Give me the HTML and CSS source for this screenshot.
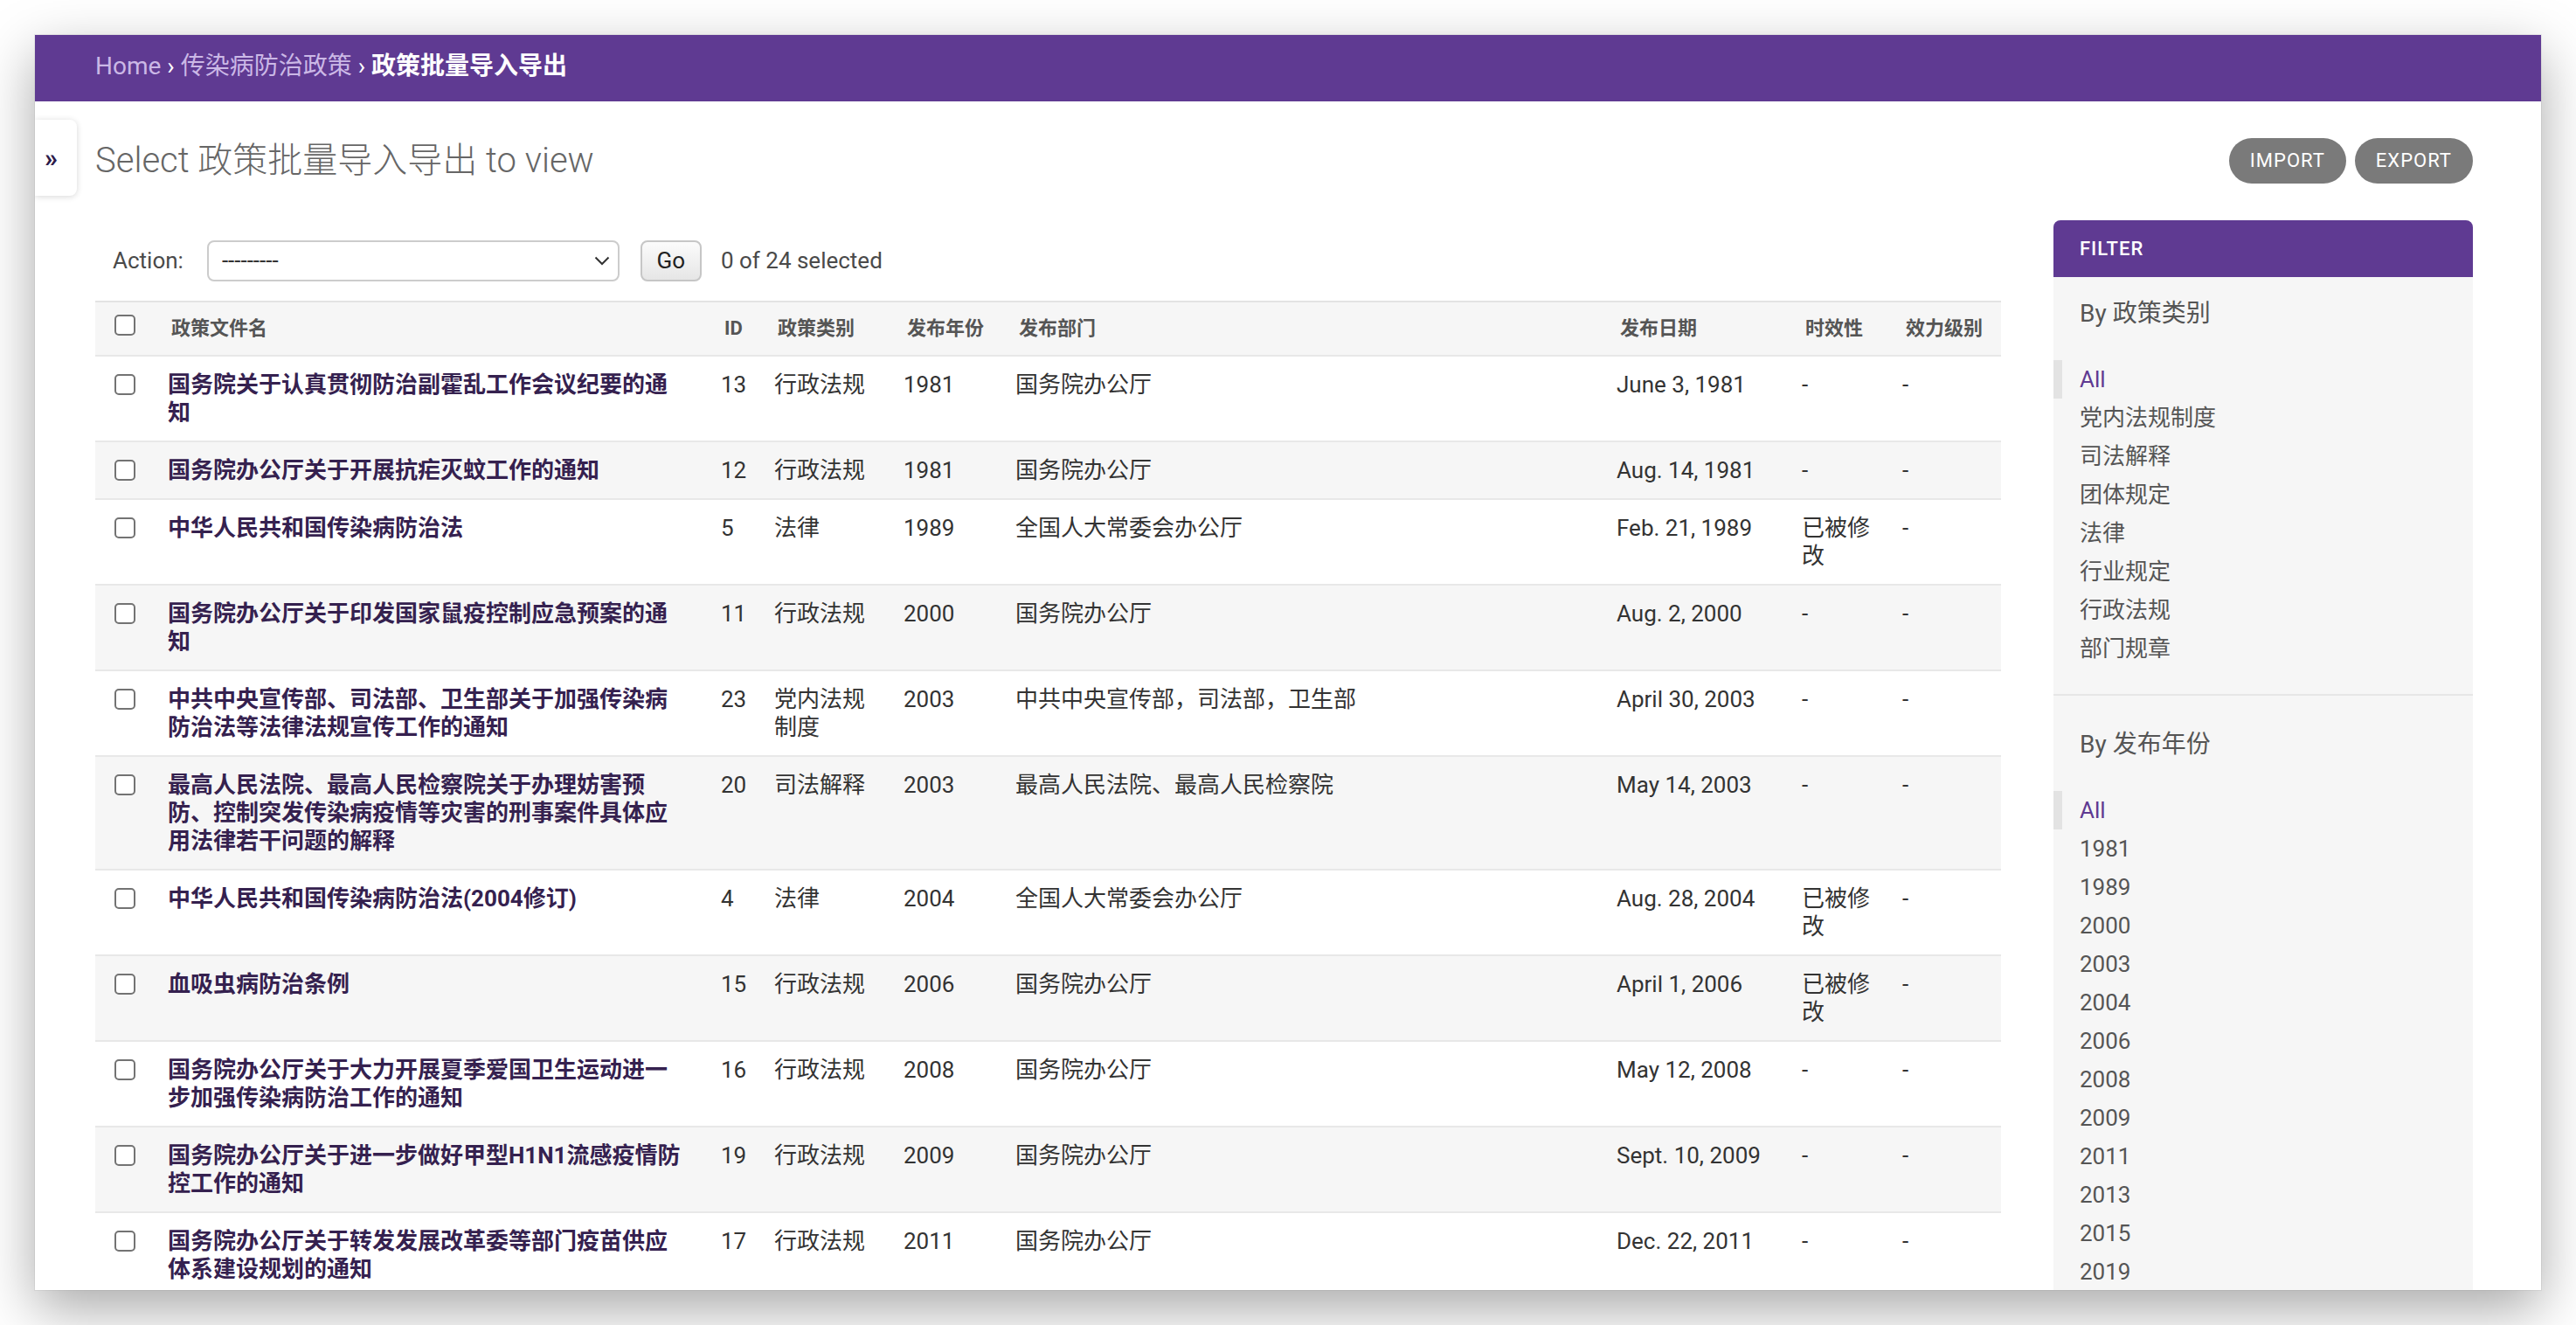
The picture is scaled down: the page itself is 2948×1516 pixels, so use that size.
FILE: index.html
```html
<!DOCTYPE html>
<html lang="zh-CN">
<head>
<meta charset="utf-8">
<title>Select 政策批量导入导出 to view</title>
<link rel="stylesheet" href="styles.css">
</head>
<body>
<div class="window">
  <div class="breadcrumbs"><a href="#">Home</a> › <a href="#">传染病防治政策</a> › <span class="current">政策批量导入导出</span></div>
  <button class="toggle-nav" type="button">»</button>
  <div class="content">
    <div class="title-row">
      <h1>Select 政策批量导入导出 to view</h1>
      <ul class="object-tools">
        <li><a href="#">Import</a></li>
        <li><a href="#">Export</a></li>
      </ul>
    </div>
    <div class="changelist">
      <div class="form-area">
        <div class="actions">
          <label class="action-label">Action:</label>
          <div class="select-wrap">
            <select class="action-select"><option>---------</option></select>
            <svg class="chevron" width="18" height="11" viewBox="0 0 18 11"><path d="M1.5 1.5 L9 9 L16.5 1.5" fill="none" stroke="#333" stroke-width="2"/></svg>
          </div>
          <button class="go" type="button">Go</button>
          <span class="counter">0 of 24 selected</span>
        </div>
        <table class="result-list">
          <colgroup>
            <col class="c-check"><col class="c-name"><col class="c-id"><col class="c-type"><col class="c-year"><col class="c-dept"><col class="c-date"><col class="c-valid"><col class="c-level">
          </colgroup>
          <thead>
            <tr>
              <th class="check-col"><input type="checkbox" class="cb cb-head"></th>
              <th>政策文件名</th>
              <th>ID</th>
              <th>政策类别</th>
              <th>发布年份</th>
              <th>发布部门</th>
              <th>发布日期</th>
              <th>时效性</th>
              <th>效力级别</th>
            </tr>
          </thead>
          <tbody>
            <tr class="row1">
              <td class="check-col"><input type="checkbox" class="cb"></td>
              <th class="field-name"><a href="#">国务院关于认真贯彻防治副霍乱工作会议纪要的通知</a></th>
              <td>13</td><td>行政法规</td><td>1981</td><td>国务院办公厅</td><td>June 3, 1981</td><td>-</td><td>-</td>
            </tr>
            <tr class="row2">
              <td class="check-col"><input type="checkbox" class="cb"></td>
              <th class="field-name"><a href="#">国务院办公厅关于开展抗疟灭蚊工作的通知</a></th>
              <td>12</td><td>行政法规</td><td>1981</td><td>国务院办公厅</td><td>Aug. 14, 1981</td><td>-</td><td>-</td>
            </tr>
            <tr class="row1">
              <td class="check-col"><input type="checkbox" class="cb"></td>
              <th class="field-name"><a href="#">中华人民共和国传染病防治法</a></th>
              <td>5</td><td>法律</td><td>1989</td><td>全国人大常委会办公厅</td><td>Feb. 21, 1989</td><td>已被修改</td><td>-</td>
            </tr>
            <tr class="row2">
              <td class="check-col"><input type="checkbox" class="cb"></td>
              <th class="field-name"><a href="#">国务院办公厅关于印发国家鼠疫控制应急预案的通知</a></th>
              <td>11</td><td>行政法规</td><td>2000</td><td>国务院办公厅</td><td>Aug. 2, 2000</td><td>-</td><td>-</td>
            </tr>
            <tr class="row1">
              <td class="check-col"><input type="checkbox" class="cb"></td>
              <th class="field-name"><a href="#">中共中央宣传部、司法部、卫生部关于加强传染病防治法等法律法规宣传工作的通知</a></th>
              <td>23</td><td>党内法规制度</td><td>2003</td><td>中共中央宣传部，司法部，卫生部</td><td>April 30, 2003</td><td>-</td><td>-</td>
            </tr>
            <tr class="row2">
              <td class="check-col"><input type="checkbox" class="cb"></td>
              <th class="field-name"><a href="#">最高人民法院、最高人民检察院关于办理妨害预防、控制突发传染病疫情等灾害的刑事案件具体应用法律若干问题的解释</a></th>
              <td>20</td><td>司法解释</td><td>2003</td><td>最高人民法院、最高人民检察院</td><td>May 14, 2003</td><td>-</td><td>-</td>
            </tr>
            <tr class="row1">
              <td class="check-col"><input type="checkbox" class="cb"></td>
              <th class="field-name"><a href="#">中华人民共和国传染病防治法(2004修订)</a></th>
              <td>4</td><td>法律</td><td>2004</td><td>全国人大常委会办公厅</td><td>Aug. 28, 2004</td><td>已被修改</td><td>-</td>
            </tr>
            <tr class="row2">
              <td class="check-col"><input type="checkbox" class="cb"></td>
              <th class="field-name"><a href="#">血吸虫病防治条例</a></th>
              <td>15</td><td>行政法规</td><td>2006</td><td>国务院办公厅</td><td>April 1, 2006</td><td>已被修改</td><td>-</td>
            </tr>
            <tr class="row1">
              <td class="check-col"><input type="checkbox" class="cb"></td>
              <th class="field-name"><a href="#">国务院办公厅关于大力开展夏季爱国卫生运动进一步加强传染病防治工作的通知</a></th>
              <td>16</td><td>行政法规</td><td>2008</td><td>国务院办公厅</td><td>May 12, 2008</td><td>-</td><td>-</td>
            </tr>
            <tr class="row2">
              <td class="check-col"><input type="checkbox" class="cb"></td>
              <th class="field-name"><a href="#">国务院办公厅关于进一步做好甲型H1N1流感疫情防控工作的通知</a></th>
              <td>19</td><td>行政法规</td><td>2009</td><td>国务院办公厅</td><td>Sept. 10, 2009</td><td>-</td><td>-</td>
            </tr>
            <tr class="row1">
              <td class="check-col"><input type="checkbox" class="cb"></td>
              <th class="field-name"><a href="#">国务院办公厅关于转发发展改革委等部门疫苗供应体系建设规划的通知</a></th>
              <td>17</td><td>行政法规</td><td>2011</td><td>国务院办公厅</td><td>Dec. 22, 2011</td><td>-</td><td>-</td>
            </tr>
          </tbody>
        </table>
      </div>
      <div class="filter">
        <h2 class="filter-title">Filter</h2>
        <h3>By 政策类别</h3>
        <ul>
          <li class="selected"><a href="#">All</a></li>
          <li><a href="#">党内法规制度</a></li>
          <li><a href="#">司法解释</a></li>
          <li><a href="#">团体规定</a></li>
          <li><a href="#">法律</a></li>
          <li><a href="#">行业规定</a></li>
          <li><a href="#">行政法规</a></li>
          <li><a href="#">部门规章</a></li>
        </ul>
        <h3>By 发布年份</h3>
        <ul>
          <li class="selected"><a href="#">All</a></li>
          <li><a href="#">1981</a></li>
          <li><a href="#">1989</a></li>
          <li><a href="#">2000</a></li>
          <li><a href="#">2003</a></li>
          <li><a href="#">2004</a></li>
          <li><a href="#">2006</a></li>
          <li><a href="#">2008</a></li>
          <li><a href="#">2009</a></li>
          <li><a href="#">2011</a></li>
          <li><a href="#">2013</a></li>
          <li><a href="#">2015</a></li>
          <li><a href="#">2019</a></li>
        </ul>
      </div>
    </div>
  </div>
</div>
</body>
</html>
```

FILE: styles.css
```css
* { box-sizing: border-box; }
html, body { margin: 0; padding: 0; background: #ffffff; }
body {
  font-family: Roboto, "Noto Sans CJK SC", sans-serif;
  color: #333333;
  font-size: 26px;
}
a { text-decoration: none; }

.window {
  position: relative;
  margin: 40px;
  width: 2868px;
  height: 1436px;
  overflow: hidden;
  background: #ffffff;
  box-shadow: 0 22px 60px rgba(0, 0, 0, 0.34), 0 0 0 1px rgba(0, 0, 0, 0.05);
}

.breadcrumbs {
  height: 76px;
  padding: 18px 69px 0;
  line-height: 36px;
  font-size: 28px;
  background: #5f3a92;
  color: #ffffff;
  white-space: nowrap;
}
.breadcrumbs a { color: #cbb8e6; }
.breadcrumbs .current { font-weight: 700; }

.toggle-nav {
  position: absolute;
  left: 0;
  top: 97px;
  width: 48px;
  height: 87px;
  padding: 0 0 0 11px;
  border: none;
  border-radius: 0 8px 8px 0;
  background: #ffffff;
  box-shadow: 0 1px 7px rgba(0, 0, 0, 0.16);
  color: #2d1b4a;
  font-family: Roboto, sans-serif;
  font-size: 30px;
  font-weight: 700;
  text-align: left;
  line-height: 87px;
}

.content { padding: 40px 78px 0 69px; }

.title-row {
  display: flex;
  justify-content: space-between;
  align-items: center;
  height: 56px;
  margin-bottom: 40px;
}
.title-row h1 {
  margin: 0;
  font-size: 40px;
  font-weight: 300;
  line-height: 48px;
  color: #666666;
}
.object-tools {
  display: flex;
  gap: 10px;
  margin: 0;
  padding: 0;
  list-style: none;
}
.object-tools a {
  display: block;
  height: 52px;
  padding: 0 24px;
  line-height: 52px;
  border-radius: 26px;
  background: #7a7a7a;
  color: #ffffff;
  font-size: 22px;
  letter-spacing: 1px;
  text-transform: uppercase;
}

.changelist { display: flex; align-items: flex-start; }
.form-area { flex: 1 1 auto; min-width: 0; }

.actions {
  display: flex;
  align-items: center;
  height: 92px;
  padding: 0 20px;
  color: #4a4a4a;
  font-size: 26px;
}
.action-label { color: #4a4a4a; }
.select-wrap {
  position: relative;
  width: 472px;
  height: 47px;
  margin-left: 27px;
}
.action-select {
  -webkit-appearance: none;
  appearance: none;
  width: 100%;
  height: 100%;
  padding: 0 15px;
  border: 2px solid #cccccc;
  border-radius: 8px;
  background: #ffffff;
  color: #333333;
  font-family: Roboto, sans-serif;
  font-size: 26px;
}
.chevron {
  position: absolute;
  right: 11px;
  top: 18px;
}
.go {
  width: 70px;
  height: 47px;
  margin-left: 24px;
  padding: 0;
  border: 2px solid #c6c6c6;
  border-radius: 8px;
  background: linear-gradient(#fbfbfb, #e6e6e6);
  color: #222222;
  font-family: Roboto, sans-serif;
  font-size: 26px;
}
.counter { margin-left: 22px; }

.result-list {
  width: 100%;
  table-layout: fixed;
  border-collapse: separate;
  border-spacing: 0;
}
.c-check { width: 67px; }
.c-name { width: 633px; }
.c-id { width: 61px; }
.c-type { width: 148px; }
.c-year { width: 128px; }
.c-dept { width: 688px; }
.c-date { width: 212px; }
.c-valid { width: 115px; }
.c-level { width: 129px; }

.result-list thead th {
  padding: 14px 20px;
  background: #f6f6f6;
  border-top: 2px solid #e3e3e3;
  border-bottom: 2px solid #e8e8e8;
  font-size: 22px;
  line-height: 32px;
  font-weight: 700;
  color: #555555;
  text-align: left;
  white-space: nowrap;
  vertical-align: middle;
}
.result-list thead th.check-col { padding: 10px 0 18px; }

.result-list tbody td,
.result-list tbody th {
  padding: 16px;
  font-size: 26px;
  line-height: 32px;
  font-weight: 400;
  text-align: left;
  vertical-align: top;
  border-bottom: 2px solid #e8e8e8;
  color: #333333;
}
.result-list tbody th.field-name { padding-right: 25px; }
.result-list tbody th.field-name a { color: #35214f; font-weight: 700; }
.result-list tbody td.check-col { padding-left: 0; padding-right: 0; }
.row1 { background: #ffffff; }
.row2 { background: #f6f6f6; }

.cb {
  -webkit-appearance: none;
  appearance: none;
  display: block;
  width: 24px;
  height: 24px;
  margin: 4px auto 0;
  border: 2px solid #737373;
  border-radius: 5px;
  background: #ffffff;
}
.cb-head { margin: 0 auto; }

.filter {
  flex: 0 0 480px;
  width: 480px;
  margin-left: 60px;
  min-height: 1400px;
  background: #f6f6f6;
  border-radius: 8px 8px 0 0;
}
.filter-title {
  margin: 0;
  height: 65px;
  padding: 0 30px;
  line-height: 65px;
  border-radius: 8px 8px 0 0;
  background: #5f3a92;
  color: #ffffff;
  font-size: 22px;
  font-weight: 500;
  letter-spacing: 1px;
  text-transform: uppercase;
}
.filter h3 {
  margin: 24px 0 35px;
  padding: 0 30px;
  font-size: 28px;
  font-weight: 400;
  line-height: 36px;
  color: #555555;
}
.filter ul {
  margin: 0 0 38px;
  padding: 0 30px 30px;
  list-style: none;
  border-bottom: 2px solid #e6e6e6;
}
.filter li {
  padding: 2px 0;
  font-size: 26px;
  line-height: 40px;
}
.filter li a { display: block; color: #555555; }
.filter li.selected {
  margin-left: -30px;
  padding-left: 20px;
  border-left: 10px solid #e3e3e3;
}
.filter li.selected a { color: #5f3a92; }
```
